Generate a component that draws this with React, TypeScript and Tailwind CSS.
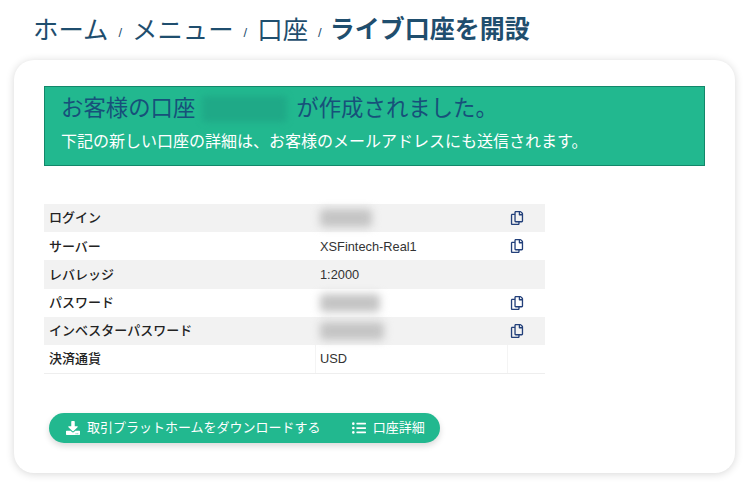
import { FaDownload, FaListUl, FaRegCopy } from "react-icons/fa";

const font = "[font-family:'Liberation_Sans','Noto_Sans_CJK_JP',sans-serif]";

function Blur({ w }: { w: string }) {
  return <div className={`h-[18px] rounded-sm bg-[#c4c4c4] blur-[4px] ${w}`} />;
}

function Row({ label, value, copy, shaded, lines }: { label: string; value: React.ReactNode; copy?: boolean; shaded?: boolean; lines?: boolean }) {
  const line = lines ? "border-l border-[#f4f4f4]" : "border-l border-transparent";
  return (
    <div className={`flex h-[28.2px] items-center ${shaded ? "bg-[#f2f2f2]" : "bg-white"}`}>
      <div className="w-[271px] pl-[5px] text-[13px] font-medium text-[#222]">{label}</div>
      <div className={`flex h-full w-[192px] items-center pl-[4px] text-[12.8px] text-[#333] ${line}`}>{value}</div>
      <div className={`flex h-full flex-1 items-center pl-[2px] text-[#23407a] ${line}`}>{copy && <FaRegCopy size={14} />}</div>
    </div>
  );
}

export default function App() {
  return (
    <div className={`h-[486px] w-[750px] overflow-hidden bg-white ${font}`}>
      <div className="flex h-[60px] items-center gap-[10px] pl-[33px] text-[#1f4e6e]">
        <span className="text-[25.4px]">ホーム</span>
        <span className="mt-[6px] text-[13px]">/</span>
        <span className="text-[25.4px]">メニュー</span>
        <span className="mt-[6px] text-[13px]">/</span>
        <span className="text-[25.4px]">口座</span>
        <span className="mt-[6px] text-[13px]">/</span>
        <span className="-ml-[2px] text-[25px] font-bold">ライブ口座を開設</span>
      </div>
      <div className="mx-[14px] h-[413px] w-[721px] rounded-[20px] bg-white px-[30px] pt-[26px] shadow-[0_1px_8px_rgba(0,0,0,0.16)]">
        <div className="h-[80px] w-[661px] border border-[#12876a] bg-[#22b88f] pl-[16px] pt-[5px]">
          <div className="flex h-[33px] items-center text-[22.4px] text-[#17507a]">
            <span>お客様の口座</span>
            <div className="ml-[7px] mr-[9px] h-[26px] w-[85px] rounded bg-[#1fa987] blur-[3px]" />
            <span>が作成されました。</span>
          </div>
          <div className="mt-[5px] text-[16px] text-white">下記の新しい口座の詳細は、お客様のメールアドレスにも送信されます。</div>
        </div>
        <div className="mt-[38px] w-[501px] border-b border-[#eee]">
          <Row shaded label="ログイン" value={<Blur w="w-[52px]" />} copy />
          <Row label="サーバー" value="XSFintech-Real1" copy />
          <Row shaded label="レバレッジ" value="1:2000" />
          <Row label="パスワード" value={<Blur w="w-[60px]" />} copy />
          <Row shaded label="インベスターパスワード" value={<Blur w="w-[64px]" />} copy />
          <Row lines label="決済通貨" value="USD" />
        </div>
        <div className="ml-[5px] mt-[39px] flex h-[30px] w-[391px] items-center rounded-full bg-[#22b88f] pl-[17px] text-[13px] text-white shadow-[0_3px_6px_rgba(0,0,0,0.15)]">
          <FaDownload size={14} />
          <span className="ml-[7px]">取引プラットホームをダウンロードする</span>
          <span className="ml-[31px]"><FaListUl size={14} /></span>
          <span className="ml-[7px]">口座詳細</span>
        </div>
      </div>
    </div>
  );
}
